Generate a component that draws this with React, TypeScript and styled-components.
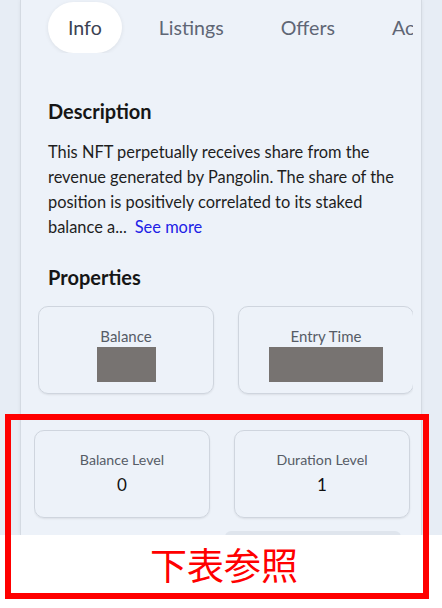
import React from "react";
import styled, { createGlobalStyle } from "styled-components";

const Global = createGlobalStyle`
  html, body { margin: 0; padding: 0; background: #ffffff; }
  body { font-family: Lato, "Noto Sans", sans-serif; -webkit-font-smoothing: antialiased; }
`;

const Page = styled.div`
  position: relative;
  width: 442px;
  height: 608px;
  overflow: hidden;
  background: #ffffff;
`;

const Shot = styled.div`
  height: 535px;
  overflow: hidden;
  background: #e7edf5;
`;

const Panel = styled.div`
  margin-left: 20px;
  width: 402px;
  height: 100%;
  box-sizing: border-box;
  background: #edf2f9;
  border-left: 1px solid #d4dae2;
  border-right: 1px solid #d4dae2;
  box-shadow: 0 0 4px rgba(0, 0, 0, 0.06);
  padding: 0 8px 0 17px;
`;

const Tabs = styled.div`
  display: flex;
  gap: 17px;
  padding: 2px 0 0 10px;
  height: 53px;
  box-sizing: border-box;
  overflow: hidden;
`;

const Tab = styled.div<{ $active?: boolean }>`
  flex-shrink: 0;
  height: 51px;
  line-height: 52px;
  padding: 0 20px;
  border-radius: 26px;
  font-size: 19.6px;
  white-space: nowrap;
  color: ${(p) => (p.$active ? "#3c4252" : "#5f6675")};
  background: ${(p) => (p.$active ? "#ffffff" : "transparent")};
  box-shadow: ${(p) => (p.$active ? "0 1px 4px rgba(0,0,0,0.08)" : "none")};
`;

const Heading = styled.h2<{ $top: number }>`
  margin: ${(p) => p.$top}px 0 0;
  padding-left: 10px;
  font-size: 20px;
  line-height: 24px;
  font-weight: 700;
  color: #161616;
`;

const Body = styled.p`
  margin: 16px 0 0;
  padding-left: 10px;
  font-size: 16.4px;
  line-height: 25px;
  color: #1e1e1e;
`;

const SeeMore = styled.span`
  margin-left: 8px;
  color: #2020e6;
`;

const CardRow = styled.div<{ $top: number; $shift?: number }>`
  display: flex;
  gap: 24px;
  margin-top: ${(p) => p.$top}px;
  margin-left: ${(p) => p.$shift ?? 0}px;
  overflow: hidden;
  padding-bottom: 3px;
`;

const Card = styled.div`
  flex-shrink: 0;
  width: 176px;
  height: 88px;
  box-sizing: border-box;
  border: 1px solid #cfd5de;
  border-radius: 10px;
  box-shadow: 0 1px 2px rgba(0, 0, 0, 0.08);
  padding-top: 20px;
  display: flex;
  flex-direction: column;
  align-items: center;
`;

const Label = styled.div<{ $size: number }>`
  font-size: ${(p) => p.$size}px;
  line-height: 18px;
  color: #565c66;
  white-space: nowrap;
`;

const Redacted = styled.div<{ $w: number }>`
  margin-top: 2px;
  width: ${(p) => p.$w}px;
  height: 35px;
  background: #777371;
`;

const Value = styled.div`
  margin-top: 6px;
  font-size: 17px;
  line-height: 20px;
  color: #111111;
`;

const Bar = styled.div`
  margin: 10px 0 0 187px;
  width: 176px;
  height: 10px;
  border-radius: 6px 6px 0 0;
  background: #dfe5ed;
`;

const Caption = styled.div`
  height: 58px;
  display: flex;
  align-items: center;
  justify-content: center;
  padding-left: 6px;
  font-family: "Noto Sans CJK JP", sans-serif;
  font-size: 37px;
  color: #ff0000;
`;

const Highlight = styled.div`
  position: absolute;
  left: 5px;
  top: 414px;
  width: 424px;
  height: 185px;
  box-sizing: border-box;
  border: 6px solid #ff0000;
  pointer-events: none;
`;

export default function App() {
  return (
    <>
      <Global />
      <Page>
        <Shot>
          <Panel>
            <Tabs>
              <Tab $active>Info</Tab>
              <Tab>Listings</Tab>
              <Tab>Offers</Tab>
              <Tab>Activity</Tab>
            </Tabs>
            <Heading $top={46}>Description</Heading>
            <Body>
              This NFT perpetually receives share from the revenue generated by
              Pangolin. The share of the position is positively correlated to its
              staked balance a...<SeeMore>See more</SeeMore>
            </Body>
            <Heading $top={26}>Properties</Heading>
            <CardRow $top={17}>
              <Card>
                <Label $size={15}>Balance</Label>
                <Redacted $w={59} />
              </Card>
              <Card>
                <Label $size={15}>Entry Time</Label>
                <Redacted $w={114} />
              </Card>
            </CardRow>
            <CardRow $top={33} $shift={-4}>
              <Card>
                <Label $size={14.2}>Balance Level</Label>
                <Value>0</Value>
              </Card>
              <Card>
                <Label $size={14.2}>Duration Level</Label>
                <Value>1</Value>
              </Card>
            </CardRow>
            <Bar />
          </Panel>
        </Shot>
        <Caption>下表参照</Caption>
        <Highlight />
      </Page>
    </>
  );
}
